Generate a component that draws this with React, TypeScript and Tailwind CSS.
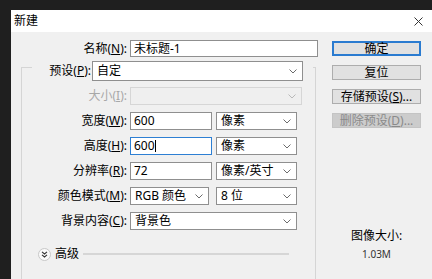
import React from 'react';

const Chevron = () => (
    <svg width="8" height="5" viewBox="0 0 8 5" className="shrink-0">
        <polyline points="0.5,0.5 4,4 7.5,0.5" fill="none" stroke="#6b6b6b" strokeWidth="1" />
    </svg>
);

function Select({ w, value, disabled }: { w: string; value?: string; disabled?: boolean }) {
    return (
        <div
            className={`${w} h-[18px] flex items-center justify-between pl-[4px] pr-[5px] border ${
                disabled ? 'border-[#d6d6d6] bg-[#efefef]' : 'border-[#8f8f8f] bg-white'
            }`}
        >
            <span className="leading-[16px] whitespace-nowrap">{value}</span>
            <span className={disabled ? 'opacity-40' : ''}>
                <Chevron />
            </span>
        </div>
    );
}

function Input({ w, value, focused }: { w: string; value: string; focused?: boolean }) {
    return (
        <div
            className={`${w} h-[18px] flex items-center pl-[3px] bg-white border ${
                focused ? 'border-[#2d7fd3]' : 'border-[#8f8f8f]'
            }`}
        >
            <span className="leading-[16px]">{value}</span>
            {focused && <span className="w-px h-[12px] bg-black" />}
        </div>
    );
}

function Label({ w, children, dim }: { w: string; children: React.ReactNode; dim?: boolean }) {
    return (
        <div className={`${w} text-right leading-[16px] whitespace-nowrap ${dim ? 'text-[#a8a8a8]' : ''}`}>
            {children}
        </div>
    );
}

const Btn = ({ children, primary, disabled }: { children: React.ReactNode; primary?: boolean; disabled?: boolean }) => (
    <div
        className={`h-[15px] flex items-center justify-center leading-[13px] ${
            primary
                ? 'border-2 border-[#2a7bd0] bg-[#e1e1e1]'
                : disabled
                ? 'border border-[#c4c4c4] bg-[#cccccc] text-[#8a8a8a]'
                : 'border border-[#adadad] bg-[#e1e1e1]'
        }`}
    >
        {children}
    </div>
);

export default function App() {
    return (
        <div className="w-[432px] h-[279px] overflow-hidden bg-[#1f1f1f] pt-[10px] pl-[11px] text-[12px] text-black font-['Noto_Sans','Noto_Sans_CJK_SC',sans-serif]">
            <div className="w-[421px] h-[269px] bg-[#f0f0f0] flex flex-col">
                <div className="h-[22px] shrink-0 bg-white flex items-center justify-between pl-[3px] pr-[9px]">
                    <span className="leading-[14px]">新建</span>
                    <svg width="9" height="9" viewBox="0 0 9 9">
                        <path d="M0.5 0.5 L8.5 8.5 M8.5 0.5 L0.5 8.5" stroke="#333" strokeWidth="1" />
                    </svg>
                </div>

                <div className="flex flex-1">
                    <div className="w-[307px] flex flex-col pt-[8px]">
                        <div className="flex items-center h-[17px]">
                            <Label w="w-[116px]">名称(<u>N</u>):</Label>
                            <div className="ml-[3px] w-[188px] h-[17px] flex items-center pl-[3px] bg-white border border-[#8f8f8f]">
                                <span className="leading-[15px]">未标题-1</span>
                            </div>
                        </div>

                        <div className="ml-[10px] w-[295px] mt-[4px] flex-1 flex flex-col">
                            <div className="flex h-[20px]">
                                <div className="w-[11px] h-[14px] mt-[6px] border-t border-l border-[#d5d5d5]" />
                                <div className="flex-1 flex items-center">
                                    <Label w="w-[59px]">预设(<u>P</u>):</Label>
                                    <div className="ml-[1px] w-[211px] h-[20px] flex items-center justify-between pl-[4px] pr-[5px] bg-white border border-[#8f8f8f]">
                                        <span className="leading-[16px]">自定</span>
                                        <Chevron />
                                    </div>
                                </div>
                                <div className="w-[3px] h-[14px] mt-[6px] border-t border-r border-[#d5d5d5]" />
                            </div>

                            <div className="flex-1 border-l border-r border-[#d5d5d5] pt-[6px] flex flex-col gap-[7px]">
                                <div className="flex items-center">
                                    <Label w="w-[105px]" dim>大小(<u>I</u>):</Label>
                                    <div className="ml-[3px]"><Select w="w-[172px]" disabled /></div>
                                </div>
                                <div className="flex items-center">
                                    <Label w="w-[105px]">宽度(<u>W</u>):</Label>
                                    <div className="ml-[3px]"><Input w="w-[82px]" value="600" /></div>
                                    <div className="ml-[4px]"><Select w="w-[81px]" value="像素" /></div>
                                </div>
                                <div className="flex items-center">
                                    <Label w="w-[105px]">高度(<u>H</u>):</Label>
                                    <div className="ml-[3px]"><Input w="w-[82px]" value="600" focused /></div>
                                    <div className="ml-[4px]"><Select w="w-[81px]" value="像素" /></div>
                                </div>
                                <div className="flex items-center">
                                    <Label w="w-[105px]">分辨率(<u>R</u>):</Label>
                                    <div className="ml-[3px]"><Input w="w-[82px]" value="72" /></div>
                                    <div className="ml-[4px]"><Select w="w-[81px]" value="像素/英寸" /></div>
                                </div>
                                <div className="flex items-center">
                                    <Label w="w-[105px]">颜色模式(<u>M</u>):</Label>
                                    <div className="ml-[3px]"><Select w="w-[79px]" value="RGB 颜色" /></div>
                                    <div className="ml-[7px]"><Select w="w-[81px]" value="8 位" /></div>
                                </div>
                                <div className="flex items-center">
                                    <Label w="w-[105px]">背景内容(<u>C</u>):</Label>
                                    <div className="ml-[3px]"><Select w="w-[167px]" value="背景色" /></div>
                                </div>

                                <div className="flex items-center h-[14px] mt-[10px]">
                                    <div className="ml-[16px] w-[13px] h-[13px] rounded-full bg-[#fafafa] border border-[#c8c8c8] flex items-center justify-center">
                                        <svg width="7" height="7" viewBox="0 0 7 7">
                                            <polyline points="1,0.8 3.5,3 6,0.8" fill="none" stroke="#333" strokeWidth="1.1" />
                                            <polyline points="1,3.8 3.5,6 6,3.8" fill="none" stroke="#333" strokeWidth="1.1" />
                                        </svg>
                                    </div>
                                    <span className="ml-[4px] leading-[14px]">高级</span>
                                    <div className="ml-[4px] mr-[26px] flex-1 h-[2px] bg-[#d6d6d6]" />
                                </div>
                            </div>
                        </div>
                    </div>

                    <div className="ml-[14px] w-[89px] pt-[9px] flex flex-col">
                        <div className="flex flex-col gap-[9px]">
                            <Btn primary>确定</Btn>
                            <Btn>复位</Btn>
                            <Btn>存储预设(<u>S</u>)...</Btn>
                            <Btn disabled>删除预设(<u>D</u>)...</Btn>
                        </div>
                        <div className="mt-[101px] flex flex-col items-center">
                            <span className="leading-[14px]">图像大小:</span>
                            <span className="mt-[5px] text-[10px] leading-[12px] text-[#333]">1.03M</span>
                        </div>
                    </div>
                </div>
            </div>
        </div>
    );
}
